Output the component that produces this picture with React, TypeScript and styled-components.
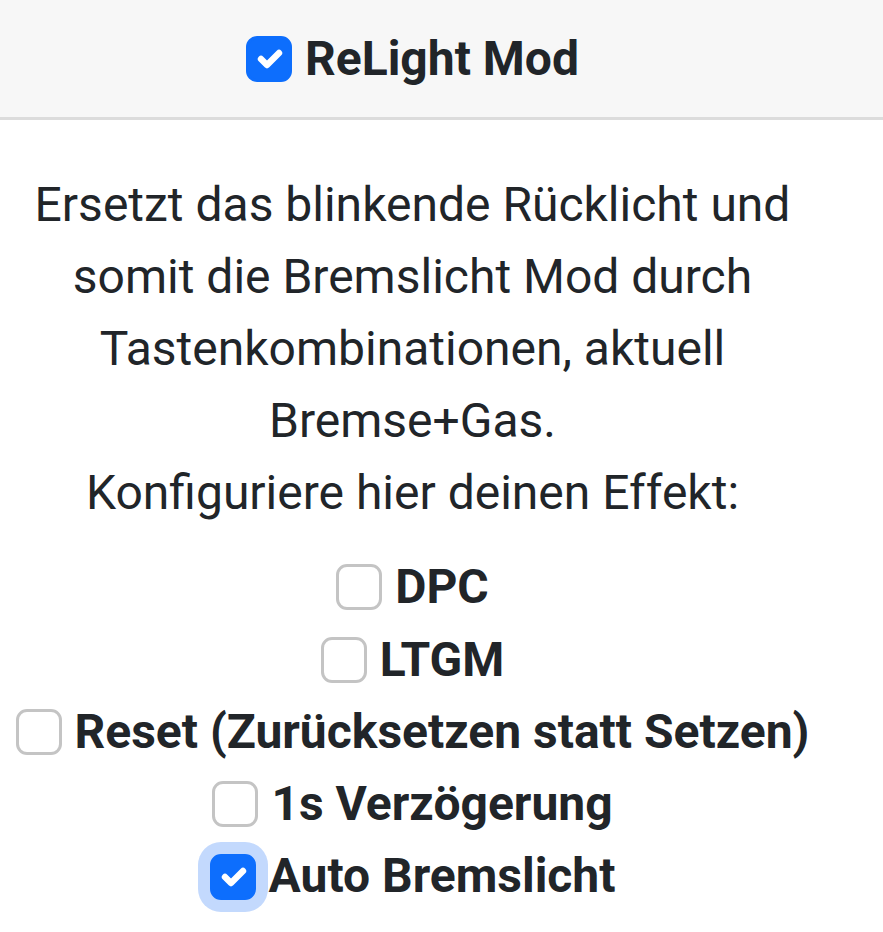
import React from 'react';
import styled, { createGlobalStyle } from 'styled-components';

const GlobalStyle = createGlobalStyle`
  html, body {
    margin: 0;
    padding: 0;
    background: #ffffff;
  }
  body {
    font-family: Roboto, 'Noto Sans', 'Liberation Sans', sans-serif;
    color: #212529;
  }
`;

const Card = styled.div`
  display: flex;
  flex-direction: column;
  width: 100%;
  background: #ffffff;
`;

const Header = styled.div`
  background: #f7f7f7;
  border-bottom: 3px solid #dcdcdc;
  padding: 23px 0 22px;
`;

// content column, centred a bit left of the viewport like the original
const Column = styled.div`
  width: 825px;
  display: flex;
  flex-direction: column;
  align-items: center;
`;

const Body = styled(Column)`
  padding: 49px 0 40px;
`;

const Text = styled.p`
  margin: 0 0 22px;
  width: 760px;
  font-size: 48px;
  line-height: 72px;
  text-align: center;
`;

const Options = styled.div`
  display: flex;
  flex-direction: column;
  align-items: center;
`;

const Row = styled.label`
  display: inline-flex;
  align-items: center;
  gap: 13px;
  font-size: 48px;
  line-height: 72.3px;
  font-weight: 700;
  white-space: nowrap;
`;

const Box = styled.span<{ checked?: boolean; focused?: boolean }>`
  flex: none;
  width: 46px;
  height: 46px;
  box-sizing: border-box;
  border-radius: 11px;
  border: 3px solid ${({ checked }) => (checked ? '#0d6efd' : '#c4c4c4')};
  background: ${({ checked }) => (checked ? '#0d6efd' : '#ffffff')};
  box-shadow: ${({ focused }) => (focused ? '0 0 0 12px #c3d9fd' : 'none')};
  display: flex;
  align-items: center;
  justify-content: center;
`;

const Check = () => (
  <svg width="42" height="42" viewBox="0 0 20 20">
    <path d="m6 10 3 3 6-6" fill="none" stroke="#fff" strokeWidth="3.2" strokeLinecap="round" strokeLinejoin="round" />
  </svg>
);

const Checkbox = ({ checked, focused }: { checked?: boolean; focused?: boolean }) => (
  <Box checked={checked} focused={focused}>
    {checked && <Check />}
  </Box>
);

const options = [
  { label: 'DPC', checked: false },
  { label: 'LTGM', checked: false },
  { label: 'Reset (Zurücksetzen statt Setzen)', checked: false },
  { label: '1s Verzögerung', checked: false },
  { label: 'Auto Bremslicht', checked: true, focused: true },
];

export default function App() {
  return (
    <>
      <GlobalStyle />
      <Card>
        <Header>
          <Column>
            <Row>
              <Checkbox checked />
              ReLight Mod
            </Row>
          </Column>
        </Header>
        <Body>
          <Text>
            Ersetzt das blinkende Rücklicht und somit die Bremslicht Mod durch Tastenkombinationen, aktuell
            Bremse+Gas.
            <br />
            Konfiguriere hier deinen Effekt:
          </Text>
          <Options>
            {options.map((o) => (
              <Row key={o.label}>
                <Checkbox checked={o.checked} focused={o.focused} />
                {o.label}
              </Row>
            ))}
          </Options>
        </Body>
      </Card>
    </>
  );
}
